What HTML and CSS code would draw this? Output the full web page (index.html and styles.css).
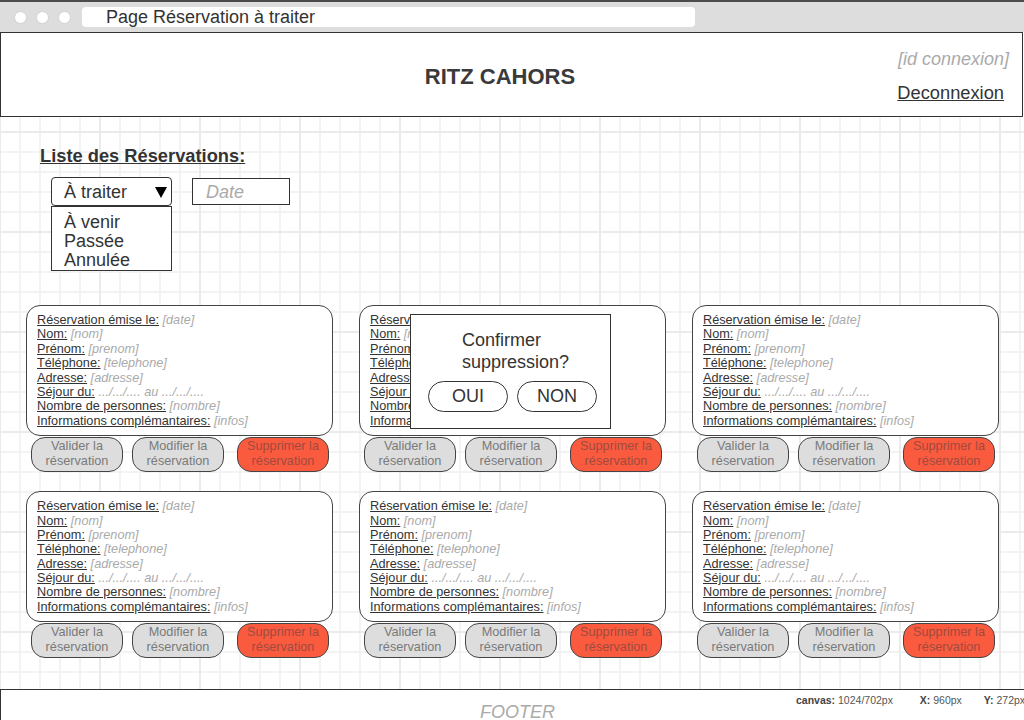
FILE: index.html
```html
<!DOCTYPE html>
<html lang="fr">
<head>
<meta charset="utf-8">
<title>Page Réservation à traiter</title>
<link rel="stylesheet" href="styles.css">
</head>
<body>
<div class="window">
  <div class="chrome">
    <div class="dots"><span class="dot"></span><span class="dot"></span><span class="dot"></span></div>
    <div class="url">Page Réservation à traiter</div>
  </div>

  <header class="header">
    <div class="brand">RITZ CAHORS</div>
    <div class="account">
      <span class="account-id">[id connexion]</span>
      <a class="logout">Deconnexion</a>
    </div>
  </header>

  <main class="main">
    <h1 class="list-title">Liste des Réservations:</h1>
    <div class="filters">
      <div class="select">
        <span class="select-value">À traiter</span>
        <svg class="caret" width="12" height="11" viewBox="0 0 12 11"><polygon points="0,0 12,0 6,11" fill="#000"/></svg>
        <ul class="select-list">
          <li>À venir</li>
          <li>Passée</li>
          <li>Annulée</li>
        </ul>
      </div>
      <div class="date-input">Date</div>
    </div>

    <div class="cards">
      <div class="reservation">
        <div class="card">
          <div class="line"><span class="lbl">Réservation émise le:</span> <span class="val">[date]</span></div>
          <div class="line"><span class="lbl">Nom:</span> <span class="val">[nom]</span></div>
          <div class="line"><span class="lbl">Prénom:</span> <span class="val">[prenom]</span></div>
          <div class="line"><span class="lbl">Téléphone:</span> <span class="val">[telephone]</span></div>
          <div class="line"><span class="lbl">Adresse:</span> <span class="val">[adresse]</span></div>
          <div class="line"><span class="lbl">Séjour du:</span> <span class="val">.../.../.... au .../.../....</span></div>
          <div class="line"><span class="lbl">Nombre de personnes:</span> <span class="val">[nombre]</span></div>
          <div class="line"><span class="lbl">Informations complémantaires:</span> <span class="val">[infos]</span></div>
        </div>
        <div class="actions">
          <button class="btn">Valider la<br>réservation</button>
          <button class="btn">Modifier la<br>réservation</button>
          <button class="btn btn-danger">Supprimer la<br>réservation</button>
        </div>
      </div>

      <div class="reservation">
        <div class="card">
          <div class="line"><span class="lbl">Réservation émise le:</span> <span class="val">[date]</span></div>
          <div class="line"><span class="lbl">Nom:</span> <span class="val">[nom]</span></div>
          <div class="line"><span class="lbl">Prénom:</span> <span class="val">[prenom]</span></div>
          <div class="line"><span class="lbl">Téléphone:</span> <span class="val">[telephone]</span></div>
          <div class="line"><span class="lbl">Adresse:</span> <span class="val">[adresse]</span></div>
          <div class="line"><span class="lbl">Séjour du:</span> <span class="val">.../.../.... au .../.../....</span></div>
          <div class="line"><span class="lbl">Nombre de personnes:</span> <span class="val">[nombre]</span></div>
          <div class="line"><span class="lbl">Informations complémantaires:</span> <span class="val">[infos]</span></div>
        </div>
        <div class="actions">
          <button class="btn">Valider la<br>réservation</button>
          <button class="btn">Modifier la<br>réservation</button>
          <button class="btn btn-danger">Supprimer la<br>réservation</button>
        </div>
        <div class="confirm">
          <p class="confirm-text">Confirmer suppression?</p>
          <div class="confirm-actions">
            <button class="pill">OUI</button>
            <button class="pill">NON</button>
          </div>
        </div>
      </div>

      <div class="reservation">
        <div class="card">
          <div class="line"><span class="lbl">Réservation émise le:</span> <span class="val">[date]</span></div>
          <div class="line"><span class="lbl">Nom:</span> <span class="val">[nom]</span></div>
          <div class="line"><span class="lbl">Prénom:</span> <span class="val">[prenom]</span></div>
          <div class="line"><span class="lbl">Téléphone:</span> <span class="val">[telephone]</span></div>
          <div class="line"><span class="lbl">Adresse:</span> <span class="val">[adresse]</span></div>
          <div class="line"><span class="lbl">Séjour du:</span> <span class="val">.../.../.... au .../.../....</span></div>
          <div class="line"><span class="lbl">Nombre de personnes:</span> <span class="val">[nombre]</span></div>
          <div class="line"><span class="lbl">Informations complémantaires:</span> <span class="val">[infos]</span></div>
        </div>
        <div class="actions">
          <button class="btn">Valider la<br>réservation</button>
          <button class="btn">Modifier la<br>réservation</button>
          <button class="btn btn-danger">Supprimer la<br>réservation</button>
        </div>
      </div>

      <div class="reservation">
        <div class="card">
          <div class="line"><span class="lbl">Réservation émise le:</span> <span class="val">[date]</span></div>
          <div class="line"><span class="lbl">Nom:</span> <span class="val">[nom]</span></div>
          <div class="line"><span class="lbl">Prénom:</span> <span class="val">[prenom]</span></div>
          <div class="line"><span class="lbl">Téléphone:</span> <span class="val">[telephone]</span></div>
          <div class="line"><span class="lbl">Adresse:</span> <span class="val">[adresse]</span></div>
          <div class="line"><span class="lbl">Séjour du:</span> <span class="val">.../.../.... au .../.../....</span></div>
          <div class="line"><span class="lbl">Nombre de personnes:</span> <span class="val">[nombre]</span></div>
          <div class="line"><span class="lbl">Informations complémantaires:</span> <span class="val">[infos]</span></div>
        </div>
        <div class="actions">
          <button class="btn">Valider la<br>réservation</button>
          <button class="btn">Modifier la<br>réservation</button>
          <button class="btn btn-danger">Supprimer la<br>réservation</button>
        </div>
      </div>

      <div class="reservation">
        <div class="card">
          <div class="line"><span class="lbl">Réservation émise le:</span> <span class="val">[date]</span></div>
          <div class="line"><span class="lbl">Nom:</span> <span class="val">[nom]</span></div>
          <div class="line"><span class="lbl">Prénom:</span> <span class="val">[prenom]</span></div>
          <div class="line"><span class="lbl">Téléphone:</span> <span class="val">[telephone]</span></div>
          <div class="line"><span class="lbl">Adresse:</span> <span class="val">[adresse]</span></div>
          <div class="line"><span class="lbl">Séjour du:</span> <span class="val">.../.../.... au .../.../....</span></div>
          <div class="line"><span class="lbl">Nombre de personnes:</span> <span class="val">[nombre]</span></div>
          <div class="line"><span class="lbl">Informations complémantaires:</span> <span class="val">[infos]</span></div>
        </div>
        <div class="actions">
          <button class="btn">Valider la<br>réservation</button>
          <button class="btn">Modifier la<br>réservation</button>
          <button class="btn btn-danger">Supprimer la<br>réservation</button>
        </div>
      </div>

      <div class="reservation">
        <div class="card">
          <div class="line"><span class="lbl">Réservation émise le:</span> <span class="val">[date]</span></div>
          <div class="line"><span class="lbl">Nom:</span> <span class="val">[nom]</span></div>
          <div class="line"><span class="lbl">Prénom:</span> <span class="val">[prenom]</span></div>
          <div class="line"><span class="lbl">Téléphone:</span> <span class="val">[telephone]</span></div>
          <div class="line"><span class="lbl">Adresse:</span> <span class="val">[adresse]</span></div>
          <div class="line"><span class="lbl">Séjour du:</span> <span class="val">.../.../.... au .../.../....</span></div>
          <div class="line"><span class="lbl">Nombre de personnes:</span> <span class="val">[nombre]</span></div>
          <div class="line"><span class="lbl">Informations complémantaires:</span> <span class="val">[infos]</span></div>
        </div>
        <div class="actions">
          <button class="btn">Valider la<br>réservation</button>
          <button class="btn">Modifier la<br>réservation</button>
          <button class="btn btn-danger">Supprimer la<br>réservation</button>
        </div>
      </div>
    </div>
  </main>

  <footer class="footer">
    <span class="footer-label">FOOTER</span>
    <div class="status">
      <span><b>canvas:</b> 1024/702px</span>
      <span class="status-gap"><b>X:</b> 960px</span>
      <span class="status-gap2"><b>Y:</b> 272px</span>
    </div>
  </footer>
</div>
</body>
</html>
```

FILE: styles.css
```css
* { box-sizing: border-box; }

html, body {
  margin: 0;
  padding: 0;
  overflow: hidden;
  background: #fff;
}

body {
  font-family: "Liberation Sans", Arial, sans-serif;
  color: #333;
}

.window {
  width: 1024px;
  height: 720px;
  overflow: hidden;
  display: flex;
  flex-direction: column;
}

/* ---- browser chrome ---- */
.chrome {
  height: 32px;
  flex: none;
  background: #dddddd;
  border-top: 2px solid #4b4b4b;
  display: flex;
  align-items: center;
}

.dots {
  display: flex;
  gap: 9px;
  margin-left: 14px;
}

.dot {
  width: 13px;
  height: 13px;
  border-radius: 50%;
  background: #fff;
  border: 1px solid #d2d2d2;
}

.url {
  margin-left: 11px;
  margin-top: -1px;
  width: 613px;
  height: 20px;
  background: #fff;
  border-radius: 4px;
  padding-left: 24px;
  font-size: 18px;
  line-height: 20px;
  color: #333;
  white-space: nowrap;
}

/* ---- header ---- */
.header {
  flex: none;
  width: 1023px;
  height: 85px;
  border: 1px solid #333;
  display: grid;
  grid-template-columns: 1fr auto 1fr;
  padding-right: 17px;
}

.brand {
  grid-column: 2;
  align-self: center;
  padding-top: 4px;
  margin-right: 6px;
  font-size: 22px;
  font-weight: bold;
  color: #3a3a3a;
}

.account {
  grid-column: 3;
  justify-self: end;
  display: flex;
  flex-direction: column;
  align-items: flex-end;
  padding-top: 16px;
  font-size: 18px;
  line-height: 21px;
}

.account-id {
  color: #aaa;
  font-style: italic;
  margin-right: -4px;
  margin-bottom: 12px;
}

.logout {
  color: #333;
  text-decoration: underline;
  font-size: 18.3px;
  margin-right: 1px;
}

/* ---- main canvas ---- */
.main {
  flex: none;
  height: 572px;
  padding: 27px 0 0 26px;
  background-color: #fff;
  background-image:
    linear-gradient(to right, #ebebeb 2px, transparent 2px),
    linear-gradient(to bottom, #ebebeb 2px, transparent 2px),
    linear-gradient(to right, #f3f3f3 2px, transparent 2px),
    linear-gradient(to bottom, #f3f3f3 2px, transparent 2px);
  background-size: 100px 100px, 100px 100px, 20px 20px, 20px 20px;
  background-position: -1px 14px;
}

.list-title {
  margin: 0 0 11px 14px;
  padding-top: 1px;
  height: 22px;
  font-size: 18.3px;
  line-height: 22px;
  font-weight: bold;
  text-decoration: underline;
  color: #333;
}

.filters {
  display: flex;
  align-items: center;
  margin-left: 25px;
}

.select {
  position: relative;
  width: 121px;
  height: 29px;
  border: 1px solid #333;
  border-radius: 4px;
  background: #fff;
  display: flex;
  align-items: center;
  justify-content: space-between;
  padding: 2px 4px 0 12px;
  font-size: 18px;
}

.select-list {
  position: absolute;
  top: 28px;
  left: -1px;
  width: 121px;
  height: 65px;
  margin: 0;
  padding: 6px 0 0 12px;
  list-style: none;
  background: #fff;
  border: 1px solid #333;
  font-size: 18px;
  line-height: 19px;
}

.date-input {
  margin-left: 20px;
  width: 98px;
  height: 27px;
  border: 1px solid #333;
  background: #fff;
  padding: 1px 0 0 13px;
  font-size: 18px;
  line-height: 25px;
  font-style: italic;
  color: #aaa;
}

/* ---- reservation cards ---- */
.cards {
  margin-top: 99px;
  display: grid;
  grid-template-columns: repeat(3, 307px);
  column-gap: 26px;
  row-gap: 19px;
}

.reservation {
  position: relative;
}

.card {
  background: #fff;
  border: 1px solid #444;
  border-radius: 14px;
  padding: 7px 10px;
  font-size: 12.7px;
  line-height: 14.4px;
  white-space: nowrap;
}

.line {
  height: 14.4px;
}

.lbl {
  color: #333;
  text-decoration: underline;
}

.val {
  color: #aaa;
  font-style: italic;
}

.actions {
  display: flex;
  gap: 9px;
  padding-left: 5px;
  margin-top: 1px;
}

.btn {
  width: 92px;
  height: 35px;
  padding: 0 0 2px;
  border: 1px solid #444;
  border-radius: 14px;
  background: #dddddd;
  color: #7a7a7a;
  font-family: "Liberation Sans", Arial, sans-serif;
  font-size: 12.7px;
  line-height: 15px;
  text-align: center;
}

.btn-danger {
  margin-left: 4px;
  background: #fa5b3f;
  color: #a04a3e;
}

/* ---- confirmation popup ---- */
.confirm {
  position: absolute;
  top: 9px;
  left: 51px;
  width: 201px;
  height: 115px;
  background: #fff;
  border: 1px solid #333;
  padding: 14px 0 0 17px;
}

.confirm-text {
  margin: 0;
  padding-left: 34px;
  font-size: 18px;
  line-height: 22px;
  color: #333;
}

.confirm-actions {
  display: flex;
  gap: 9px;
  margin-top: 8px;
}

.pill {
  width: 80px;
  height: 31px;
  padding: 0;
  border: 1px solid #333;
  border-radius: 16px;
  background: #fff;
  color: #333;
  font-family: "Liberation Sans", Arial, sans-serif;
  font-size: 18px;
}

/* ---- footer ---- */
.footer {
  position: relative;
  flex: 1;
  border-top: 1px solid #333;
  border-left: 1px solid #333;
  padding: 12px 0 0 10px;
  text-align: center;
  font-size: 18px;
  line-height: 21px;
  font-style: italic;
  color: #aaa;
}

.status {
  position: absolute;
  top: 4px;
  left: 795px;
  white-space: nowrap;
  font-style: normal;
  font-size: 10.5px;
  line-height: 12px;
  color: #555;
  text-align: left;
}

.status b {
  color: #444;
}

.status-gap { margin-left: 24px; }
.status-gap2 { margin-left: 19px; }
```
